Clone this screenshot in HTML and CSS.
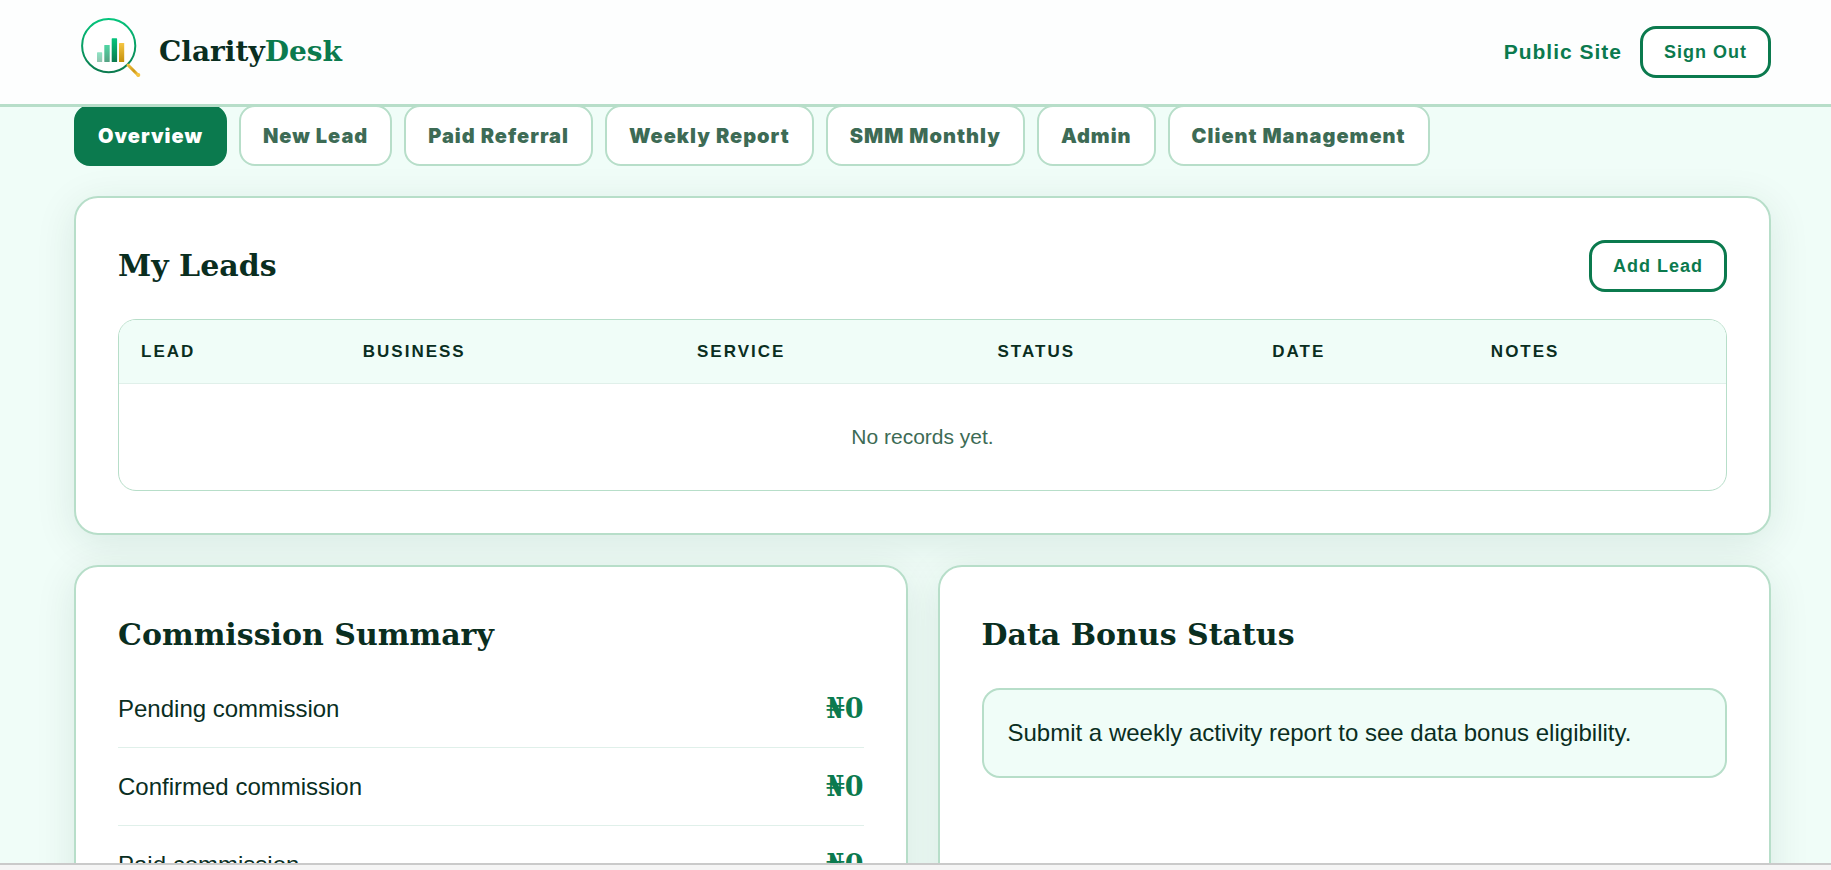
FILE: index.html
```html
<!DOCTYPE html>
<html lang="en">
<head>
<meta charset="utf-8">
<title>ClarityDesk</title>
<link rel="stylesheet" href="styles.css">
</head>
<body>
<header class="site-header">
  <a class="brand" href="#">
    <svg class="brand-mark" viewBox="0 0 64 78" aria-hidden="true">
      <defs>
        <linearGradient id="ring" x1="0" y1="0" x2="0" y2="1"><stop offset="0" stop-color="#05c47c"/><stop offset="1" stop-color="#0b7a4e"/></linearGradient>
        <linearGradient id="gold" x1="0" y1="0" x2="0" y2="1"><stop offset="0" stop-color="#f5c542"/><stop offset="1" stop-color="#c4900c"/></linearGradient>
        <linearGradient id="handle" x1="0" y1="0" x2="1" y2="1"><stop offset="0" stop-color="#f0bf3c"/><stop offset=".6" stop-color="#cf9a18"/><stop offset="1" stop-color="#f5c542"/></linearGradient>
      </defs>
      <circle cx="30.700" cy="32.700" r="26.600" fill="#fff" stroke="url(#ring)" stroke-width="2"/>
      <rect x="19" y="39.300" width="5.200" height="9.700" rx=".6" fill="url(#ring)" opacity=".45"/>
      <rect x="26.300" y="32" width="5.400" height="17" rx=".6" fill="url(#ring)" opacity=".7"/>
      <rect x="33.700" y="25.300" width="5.400" height="23.700" rx=".6" fill="url(#ring)"/>
      <rect x="41" y="30" width="5.200" height="19" rx=".6" fill="url(#gold)"/>
      <path d="M50 52 60 62" stroke="url(#handle)" stroke-width="3" stroke-linecap="round"/>
      <circle cx="60.300" cy="62" r="2" fill="#f5c542"/>
    </svg>
    <span class="brand-name">Clarity<span class="brand-accent">Desk</span></span>
  </a>
  <nav class="header-actions">
    <a class="header-link" href="#">Public Site</a>
    <button class="button" type="button">Sign Out</button>
  </nav>
</header>
<main class="page">
  <nav class="tabs">
    <button class="tab tab-active" type="button">Overview</button>
    <button class="tab" type="button">New Lead</button>
    <button class="tab" type="button">Paid Referral</button>
    <button class="tab" type="button">Weekly Report</button>
    <button class="tab" type="button">SMM Monthly</button>
    <button class="tab" type="button">Admin</button>
    <button class="tab" type="button">Client Management</button>
  </nav>
  <div class="grid">
    <section class="card card-wide">
      <div class="card-head">
        <h2 class="card-title">My Leads</h2>
        <button class="button" type="button">Add Lead</button>
      </div>
      <div class="table-wrap">
        <table class="table">
          <colgroup><col class="col-lead"><col class="col-business"><col class="col-service"><col class="col-status"><col class="col-date"><col class="col-notes"></colgroup>
          <thead><tr><th>LEAD</th><th>BUSINESS</th><th>SERVICE</th><th>STATUS</th><th>DATE</th><th>NOTES</th></tr></thead>
          <tbody><tr><td class="empty" colspan="6">No records yet.</td></tr></tbody>
        </table>
      </div>
    </section>
    <section class="card">
      <div class="card-head"><h2 class="card-title">Commission Summary</h2></div>
      <dl class="summary">
        <div class="summary-row"><dt>Pending commission</dt><dd class="amount">₦0</dd></div>
        <div class="summary-row"><dt>Confirmed commission</dt><dd class="amount">₦0</dd></div>
        <div class="summary-row"><dt>Paid commission</dt><dd class="amount">₦0</dd></div>
      </dl>
    </section>
    <section class="card">
      <div class="card-head"><h2 class="card-title">Data Bonus Status</h2></div>
      <p class="notice">Submit a weekly activity report to see data bonus eligibility.</p>
    </section>
  </div>
</main>
<div class="status-strip"></div>
</body>
</html>
```
FILE: styles.css
```css
:root {
  --green: #0b7a4e;
  --ink: #0a2e1f;
  --muted: #3d6b55;
  --line: #b7dec9;
  --line-soft: #e0f0ea;
  --mint: #f0fdf8;
  --sans: Arial, "Liberation Sans", sans-serif;
  --serif: Georgia, "DejaVu Serif", serif;
}

* { box-sizing: border-box; }

body {
  margin: 0;
  height: 100vh;
  display: flex;
  flex-direction: column;
  overflow: hidden;
  background: var(--mint);
  color: var(--ink);
  font: 24px/38px var(--sans);
}

.site-header {
  flex: none;
  display: flex;
  align-items: center;
  justify-content: space-between;
  padding: 13px 60px 13px 78px;
  border-bottom: 3px solid var(--line);
  background: #fdfefe;
}

.brand {
  display: flex;
  align-items: center;
  gap: 17px;
  color: var(--ink);
  text-decoration: none;
}

.brand-mark {
  width: 64px;
  height: 78px;
}

.brand-name { font: bold 28px/40px var(--serif); }
.brand-accent { color: var(--green); }

.header-actions {
  display: flex;
  align-items: center;
  gap: 18px;
}

.header-link {
  color: var(--green);
  font-size: 21px;
  font-weight: bold;
  letter-spacing: 1px;
  text-decoration: none;
}

.button {
  height: 52px;
  padding: 0 21px;
  border: 3px solid var(--green);
  border-radius: 16px;
  background: #fff;
  color: var(--green);
  font: bold 18px/24px var(--sans);
  letter-spacing: 1px;
}

.page {
  flex: 1;
  min-height: 0;
  overflow: hidden;
  padding: 0 60px 0 74px;
}

.tabs {
  display: flex;
  gap: 12px;
  margin-top: -2px;
  margin-bottom: 30px;
}

.tab {
  height: 61px;
  padding: 0 22px;
  border: 2px solid var(--line);
  border-radius: 16px;
  background: #fff;
  color: var(--muted);
  font: 900 20px/24px Inter, var(--sans);
  letter-spacing: 1px;
}

.tab-active {
  border-color: var(--green);
  background: var(--green);
  color: #fff;
}

.grid {
  display: grid;
  grid-template-columns: 1fr 1fr;
  gap: 30px;
}

.card {
  padding: 42px;
  border: 2px solid var(--line);
  border-radius: 24px;
  background: #fff;
  box-shadow: 0 8px 40px rgba(11, 60, 40, 0.1);
}

.card-wide { grid-column: 1 / -1; }

.card-head {
  display: flex;
  align-items: center;
  justify-content: space-between;
  min-height: 52px;
  margin-bottom: 27px;
}

.card-title {
  margin: 0;
  font: bold 30px/42px var(--serif);
}

.table-wrap {
  overflow: hidden;
  border: 1px solid var(--line);
  border-radius: 18px;
}

.table {
  width: 100%;
  table-layout: fixed;
  border-collapse: collapse;
}

.col-lead { width: 13.8%; }
.col-business { width: 20.8%; }
.col-service { width: 18.7%; }
.col-status { width: 17.1%; }
.col-date { width: 13.6%; }
.col-notes { width: 16%; }

.table th {
  padding: 18px 22px;
  border-bottom: 1px solid var(--line-soft);
  background: var(--mint);
  font-size: 17px;
  line-height: 27px;
  letter-spacing: 2px;
  text-align: left;
}

.table .empty {
  padding: 36px 22px;
  color: var(--muted);
  font-size: 21px;
  line-height: 34px;
  text-align: center;
}

.summary { margin: 0; }

.summary-row {
  display: flex;
  align-items: center;
  justify-content: space-between;
  padding: 18px 0 17px;
  border-bottom: 1px solid var(--line-soft);
  line-height: 42px;
}

.summary-row:first-child { padding-top: 0; }

.amount {
  margin: 0;
  color: var(--green);
  font-family: var(--serif);
  font-size: 27px;
  font-weight: bold;
}

.notice {
  margin: 0;
  padding: 24px;
  border: 2px solid var(--line);
  border-radius: 18px;
  background: var(--mint);
}

.status-strip {
  flex: none;
  height: 7px;
  border-top: 2px solid #cacaca;
  background: #f5f5f5;
}
```
